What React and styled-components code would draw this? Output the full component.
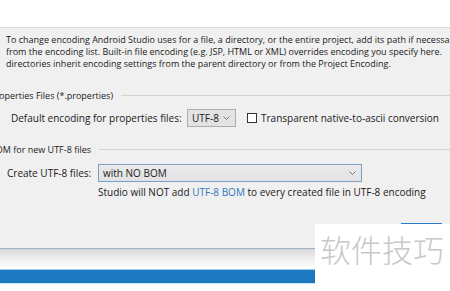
import React from 'react';
import styled, { createGlobalStyle } from 'styled-components';

const Global = createGlobalStyle`
  html, body { margin: 0; padding: 0; background: #ffffff; }
  body { width: 450px; height: 291px; overflow: hidden; }
`;

const Page = styled.div`
  position: relative;
  width: 450px;
  height: 291px;
  overflow: hidden;
  display: flex;
  flex-direction: column;
  background: #ffffff;
  font-family: "Open Sans", "Noto Sans", sans-serif;
  font-size: 10px;
  color: #1a1a1a;
`;

const TopStrip = styled.div`
  height: 27px;
  flex: none;
  background: #ffffff;
  border-bottom: 1px solid #dcdcdc;
`;

const Panel = styled.div`
  box-sizing: border-box;
  height: 221px;
  flex: none;
  background: #f0f0f0;
  border-bottom: 1px solid #9fb3c4;
  padding-top: 6px;
  display: flex;
  flex-direction: column;
`;

const Paragraph = styled.div`
  padding-left: 6px;
  font-size: 9px;
  line-height: 12px;
  white-space: nowrap;
`;

const TitledSeparator = styled.div`
  display: flex;
  align-items: center;
  height: 12px;
  margin-top: ${p => p.$top}px;
  margin-left: -10px;
  font-size: 9px;
  white-space: nowrap;
  &::after {
    content: "";
    flex: 1;
    height: 1px;
    margin-left: 8px;
    background: #d3d3d3;
  }
`;

const Row = styled.div`
  display: flex;
  align-items: center;
  height: 18px;
  margin-top: ${p => p.$top}px;
  padding-left: ${p => p.$left}px;
  white-space: nowrap;
`;

const Label = styled.span`
  width: ${p => p.$w}px;
  flex: none;
`;

const Select = styled.div`
  box-sizing: border-box;
  height: 18px;
  width: ${p => p.$w}px;
  flex: none;
  display: flex;
  align-items: center;
  justify-content: space-between;
  padding: 0 5px 0 4px;
  border: 1px solid ${p => (p.$focus ? '#7a9fc4' : '#adadad')};
  background: ${p => (p.$focus ? 'linear-gradient(#eaeaea, #e2e2e2)' : '#e3e3e3')};
`;

const Chevron = () => (
  <svg width="7" height="4" viewBox="0 0 7 4" style={{ display: 'block' }}>
    <path d="M0.5 0.5 L3.5 3.5 L6.5 0.5" fill="none" stroke="#6a6a6a" strokeWidth="0.9" />
  </svg>
);

const CheckBox = styled.span`
  box-sizing: border-box;
  width: 10px;
  height: 10px;
  flex: none;
  margin-left: 11px;
  margin-right: 4px;
  border: 1px solid #333333;
  background: #ffffff;
`;

const Hint = styled.div`
  margin-top: 4.5px;
  padding-left: 98px;
  line-height: 12px;
  white-space: nowrap;
`;

const Link = styled.span`
  color: #2f77bd;
`;

const ButtonRow = styled.div`
  display: flex;
  justify-content: flex-end;
  margin-top: 24.5px;
  padding-right: 8px;
`;

const Button = styled.div`
  box-sizing: border-box;
  width: 41px;
  height: 22px;
  border: 1px solid #2a7ad0;
  background: #e5f1fb;
`;

const Shade = styled.div`
  height: 20px;
  flex: none;
  background: linear-gradient(#d9d9d9, #f6f6f6 70%, #ffffff);
`;

const BlueBar = styled.div`
  height: 13px;
  flex: none;
  background: #1c79c0;
  border-top: 1px solid #9fcdea;
  border-bottom: 1px solid #c8e7f7;
`;

const Watermark = styled.div`
  position: absolute;
  left: 315px;
  top: 224px;
  right: 0;
  bottom: 0;
  background: #ffffff;
  padding: 10px 0 0 5px;
  font-family: "Noto Sans CJK SC", sans-serif;
  font-weight: 300;
  font-size: 31px;
  line-height: 30px;
  color: #c8c8c8;
  white-space: nowrap;
`;

export default function App() {
  return (
    <>
      <Global />
      <Page>
        <TopStrip />
        <Panel>
          <Paragraph>
            To change encoding Android Studio uses for a file, a directory, or the entire project, add its path if necessary
            <br />
            from the encoding list. Built-in file encoding (e.g. JSP, HTML or XML) overrides encoding you specify here.
            <br />
            directories inherit encoding settings from the parent directory or from the Project Encoding.
          </Paragraph>
          <TitledSeparator $top={19}>Properties Files (*.properties)</TitledSeparator>
          <Row $top={7.5} $left={11}>
            <Label $w={176}>Default encoding for properties files:</Label>
            <Select $w={49}>
              <span>UTF-8</span>
              <Chevron />
            </Select>
            <CheckBox />
            <span>Transparent native-to-ascii conversion</span>
          </Row>
          <TitledSeparator $top={17}>BOM for new UTF-8 files</TitledSeparator>
          <Row $top={8} $left={7}>
            <Label $w={91}>Create UTF-8 files:</Label>
            <Select $w={264} $focus>
              <span>with NO BOM</span>
              <Chevron />
            </Select>
          </Row>
          <Hint>
            Studio will NOT add <Link>UTF-8 BOM</Link> to every created file in UTF-8 encoding
          </Hint>
          <ButtonRow>
            <Button />
          </ButtonRow>
        </Panel>
        <Shade />
        <BlueBar />
        <Watermark>软件技巧</Watermark>
      </Page>
    </>
  );
}
